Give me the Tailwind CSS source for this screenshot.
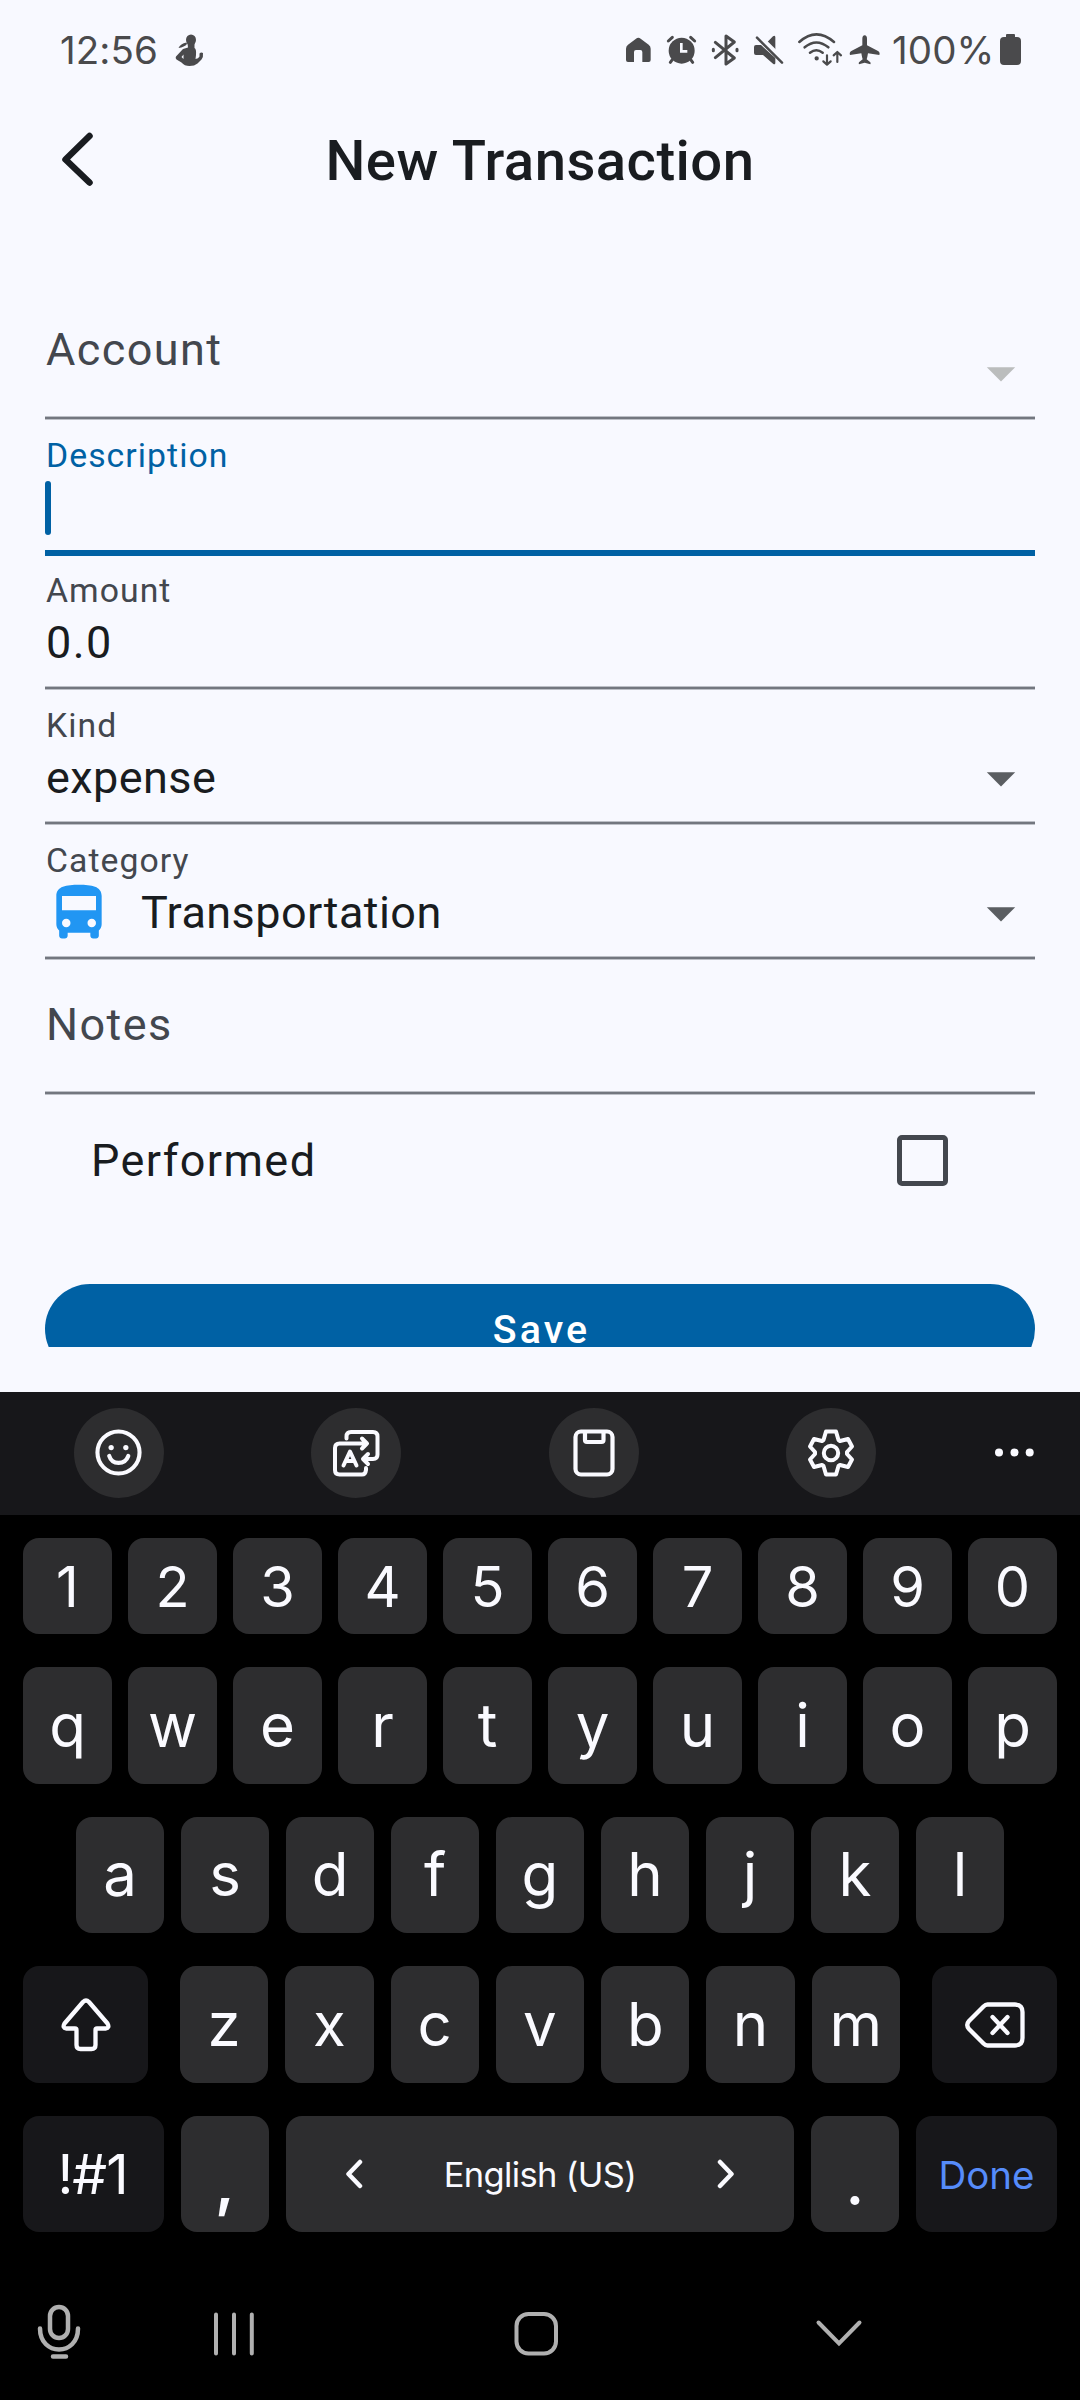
<!DOCTYPE html>
<html lang="en">
<head>
<meta charset="utf-8">
<title>New Transaction</title>
<script src="https://cdn.jsdelivr.net/npm/@tailwindcss/browser@4"></script>
</head>
<body class="w-[1080px] h-[2400px] overflow-hidden bg-[#f8f9ff] flex flex-col font-['Roboto',sans-serif] text-[#191c20]">

<!-- Status bar -->
<header class="h-[100px] shrink-0 flex items-start pt-[32px] pl-[60px] text-[#4a4a4c] font-['Inter',sans-serif] text-[38.500px] leading-[36px]">
  <span class="w-[111px] tracking-[0.1px] whitespace-nowrap">12:56</span>
  <svg class="ml-[4px] w-[30px] h-[36px]" viewBox="175 32 30 36" fill="#4a4a4c"><ellipse cx="191" cy="40" rx="5" ry="5.5"/><path d="M187.500 43h7v5q2 1 1.500 7l-.5 4q3-.500 4-2.500l0-3q1.500-1.500 3.500-.5.500 4-1.500 6.500l-4 4q-3 2.500-8 2.500t-8-3.500l-5-3q-1.500-1.500-.5-3l7-7.500 5-1.500z"/><path d="M178.500 48q2-4.500 8-5.500l.5 1.500q-2.500 3-8.500 4z"/><path d="M183.500 54.500v4.500l-2-2z" fill="#f8f9ff"/></svg>
  <div class="flex ml-[419px]">
    <svg class="w-[40px] h-[36px]" viewBox="72 96 120 108" fill="#4a4a4c"><path d="M78 146Q78 138 84 134L108 116Q115 111 122 116L146 134Q152 138 152 146V180Q152 186 146 186H127V156Q127 150 121 150H108Q102 150 102 156V186H84Q78 186 78 180Z"/></svg>
    <svg class="w-[45px] h-[36px]" viewBox="192 96 135 108"><g stroke="#4a4a4c" fill="none" stroke-linecap="round"><path stroke-width="9" d="M205 123L217 112M284 123L272 112"/><path stroke-width="9" d="M217 179L211 187M272 179L278 187"/></g><circle cx="245" cy="152" r="39" fill="#4a4a4c"/><path d="M244 129V154H262" fill="none" stroke="#f8f9ff" stroke-width="8"/></svg>
    <svg class="w-[41px] h-[36px]" viewBox="327 96 123 108" fill="none" stroke="#4a4a4c" stroke-width="9" stroke-linecap="round" stroke-linejoin="round"><path d="M346 127L403 174L378 192V108L403 126L346 173"/><path d="M340 148V152M411 148V152" stroke-width="9"/></svg>
    <svg class="w-[45px] h-[36px]" viewBox="450 96 135 108" fill="#4a4a4c"><path d="M500 128L519 109Q526 104 526 112V152ZM468 135H483L526 174V188Q526 196 519 191L489 165H468Q462 165 462 159V141Q462 135 468 135Z"/><path d="M478 105L554 180" stroke="#f8f9ff" stroke-width="8"/><path d="M471 113L546 188" stroke="#4a4a4c" stroke-width="7.500" stroke-linecap="round"/></svg>
    <svg class="w-[51px] h-[36px]" viewBox="585 96 153 108" fill="none" stroke="#4a4a4c" stroke-width="7.500" stroke-linecap="round" stroke-linejoin="round"><path d="M598 126Q649 80 702 126M614 142Q649 113 685 142M630 158Q649 143 668 158"/><circle cx="650" cy="175" r="3.500" fill="#4a4a4c" stroke-width="6"/><path d="M681 166V193M670 184L681 194L692 184M712 186V157M701 166L712 156L723 166" stroke-width="6.500"/></svg>
    <svg class="w-[38px] h-[36px]" viewBox="738 96 114 108" fill="#4a4a4c"><path d="M794 106Q801 107 801 116V136L834 153Q841 157 838 165L804 160Q802 172 800 178L811 187Q813 190 811 193L794 188L777 193Q775 190 777 187L788 178Q786 172 784 160L750 165Q747 157 754 153L787 136V116Q787 107 794 106Z"/></svg>
  </div>
  <span class="ml-[8px] w-[106px] tracking-[0.1px] whitespace-nowrap">100%</span>
  <svg class="w-[26px] h-[36px]" viewBox="998 32 26 36" fill="#4a4a4c"><path d="M1006 37v-2q0-1 1-1h7q1 0 1 1v2h2q4 0 4 4v20q0 4-4 4h-13q-4 0-4-4v-20q0-4 4-4z"/></svg>
</header>

<!-- App bar -->
<div class="h-[120px] shrink-0 flex items-center relative">
  <svg class="ml-[54px] w-[48px] h-[60px]" viewBox="55 130 48 60" fill="none" stroke="#191c20" stroke-width="6.500" stroke-linecap="round" stroke-linejoin="round"><path d="M90.500 136L66.500 159.500L90.500 182.500"/></svg>
  <h1 class="absolute inset-x-0 top-[31px] text-center text-[56.25px] leading-[60px] font-medium tracking-[0.45px]">New Transaction</h1>
</div>

<!-- Form -->
<main class="h-[1127px] shrink-0 pt-[65px] px-[45px] overflow-hidden text-[45px] leading-[56px] tracking-[1.4px]">
  <div class="h-[135px] flex flex-col">
    <div class="flex-1 flex justify-between pt-[37px]"><span class="pl-px text-[#43474e]">Account</span>
      <svg class="w-[68px] h-[68px] mt-[17px]" viewBox="0 0 24 24" fill="#bbbdbd"><path d="M7 10l5 5 5-5z"/></svg></div>
    <div class="h-[4px] bg-[#73777f] border-y border-[#bdc0c7]"></div>
  </div>
  <div class="h-[136px] flex flex-col text-[#0061a4]">
    <div class="flex-1 pt-[16px]"><div class="pl-px text-[33.75px] leading-[40px] tracking-[1.050px]">Description</div>
      <div class="mt-[5px] w-[5.600px] h-[54px] rounded-full bg-[#0061a4]"></div></div>
    <div class="h-[6px] bg-[#0061a4]"></div>
  </div>
  <div class="h-[134px] flex flex-col">
    <div class="flex-1 pt-[15px] pl-px"><div class="text-[33.75px] leading-[40px] tracking-[1.050px] text-[#43474e]">Amount</div><div class="mt-[4px]">0.0</div></div>
    <div class="h-[4px] bg-[#73777f] border-y border-[#bdc0c7]"></div>
  </div>
  <div class="h-[135px] flex flex-col">
    <div class="flex-1 pt-[16px] flex justify-between"><div class="pl-px"><div class="text-[33.75px] leading-[40px] tracking-[1.050px] text-[#43474e]">Kind</div><div class="mt-[4px] tracking-[0.42px]">expense</div></div>
      <svg class="w-[68px] h-[68px] mt-[38px]" viewBox="0 0 24 24" fill="#5b5e62"><path d="M7 10l5 5 5-5z"/></svg></div>
    <div class="h-[4px] bg-[#73777f] border-y border-[#bdc0c7]"></div>
  </div>
  <div class="h-[135px] flex flex-col">
    <div class="flex-1 pt-[16px] flex justify-between"><div><div class="pl-px text-[33.75px] leading-[40px] tracking-[1.050px] text-[#43474e]">Category</div>
      <div class="mt-[4px] flex"><svg class="w-[68px] h-[68px] -mt-[6px] mr-[28px]" viewBox="0 0 24 24" fill="#2196f3"><path d="M4 16c0 .88.39 1.670 1 2.220V20c0 .55.45 1 1 1h1c.55 0 1-.45 1-1v-1h8v1c0 .55.45 1 1 1h1c.55 0 1-.45 1-1v-1.780c.61-.55 1-1.340 1-2.220V6c0-3.500-3.580-4-8-4s-8 .5-8 4v10zm3.500 1c-.83 0-1.500-.67-1.500-1.500S6.670 14 7.500 14s1.500.67 1.500 1.500S8.330 17 7.500 17zm9 0c-.83 0-1.500-.67-1.500-1.500s.67-1.500 1.500-1.500 1.500.67 1.500 1.500-.67 1.500-1.500 1.500zm1.500-6H6V6h12v5z"/></svg><span class="tracking-[0.42px]">Transportation</span></div></div>
      <svg class="w-[68px] h-[68px] mt-[38px]" viewBox="0 0 24 24" fill="#5b5e62"><path d="M7 10l5 5 5-5z"/></svg></div>
    <div class="h-[4px] bg-[#73777f] border-y border-[#bdc0c7]"></div>
  </div>
  <div class="h-[135px] flex flex-col">
    <div class="flex-1 pt-[37px] pl-px text-[#43474e]">Notes</div>
    <div class="h-[4px] bg-[#73777f] border-y border-[#bdc0c7]"></div>
  </div>
  <div class="h-[131px] flex items-center justify-between pl-[46px] pr-[87px]">
    <span>Performed</span>
    <span class="w-[51px] h-[51px] rounded-[5px] border-[5.600px] border-[#43474e]"></span>
  </div>
  <button class="mt-[58px] w-full h-[90px] rounded-full bg-[#0061a4] text-white text-[39.375px] leading-[91px] font-medium tracking-[3.100px] pl-[3px] block">Save</button>
</main>
<div class="h-[45px] shrink-0"></div>

<!-- Keyboard -->
<section class="flex-1 bg-black text-[#fafaff] font-['Inter',sans-serif]">
  <div class="h-[123px] bg-[#17171a] flex items-start pt-[16px] pl-[74px]">
    <div class="size-[90px] rounded-full bg-[#2d2d2f] mr-[147px] flex items-center justify-center">
      <svg class="w-[47px] h-[47px] mr-px mb-px" viewBox="0 0 48 48" fill="none" stroke="#fafaff" stroke-width="4.200" stroke-linecap="round"><circle cx="24" cy="24" r="21.500"/><path d="M14.500 27.500c3 9.500 16 9.500 19.500 0"/><circle cx="16.500" cy="19" r="2.700" fill="#fafaff" stroke="none"/><circle cx="31.500" cy="19" r="2.700" fill="#fafaff" stroke="none"/></svg>
    </div>
    <div class="size-[90px] rounded-full bg-[#2d2d2f] mr-[148px] flex items-center justify-center">
      <svg class="w-[48px] h-[48px] mr-px mb-px" viewBox="0 0 48 48" fill="none" stroke="#fafaff" stroke-width="4" stroke-linecap="round" stroke-linejoin="round"><path d="M14.500 9.500V7.500q0-4.500 4.500-4.500h22q4.500 0 4.500 4.500v18q0 4.500-4.500 4.500h-9M36 25l-5 5 5 5"/><path d="M35 14.500H7.500q-4.500 0-4.500 4.500v22q0 4.500 4.500 4.500h22.500q3.500 0 4-4.500v-2M30 9.500l5 5-5 5"/><path d="M11.500 36.500l6.500-14 6.500 14M14 32h8"/></svg>
    </div>
    <div class="size-[90px] rounded-full bg-[#2d2d2f] mr-[147px] flex items-center justify-center">
      <svg class="w-[48px] h-[48px] mr-px mb-px" viewBox="0 0 48 48" fill="none" stroke="#fafaff" stroke-width="4.200"><rect x="5.500" y="2.500" width="37" height="43" rx="5.500"/><path d="M15 3v8q0 2 2 2h14.500q2 0 2-2V3"/></svg>
    </div>
    <div class="size-[90px] rounded-full bg-[#2d2d2f] mr-[117px] flex items-center justify-center">
      <svg class="w-[48px] h-[48px] mr-px mb-px" viewBox="0 0 48 48" fill="none" stroke="#fafaff" stroke-width="4" stroke-linejoin="round"><circle cx="24" cy="24" r="7.200"/><path d="M19 2.500h10l2.500 8.500 1.500 1 8-2 4 7.500-5 5.500v2l5 5.500-4 7.500-8-2-1.500 1-2.500 8.500h-10l-2.500-8.500-1.500-1-8 2-4-7.500 5-5.500v-2l-5-5.500 4-7.500 8 2 1.500-1z"/></svg>
    </div>
    <svg class="w-[42px] h-[90px]" viewBox="0 0 42 90" fill="#fafaff"><circle cx="6" cy="44.500" r="4"/><circle cx="21.500" cy="44.500" r="4"/><circle cx="36.700" cy="44.500" r="4"/></svg>
  </div>

  <div class="pt-[23px] px-[23px] flex flex-col">
    <div class="flex gap-[16px] h-[96px] mb-[33px] text-[56px] leading-[98px] text-center [&>*]:flex-1 [&>*]:rounded-[16px] [&>*]:bg-[#2d2d2f]">
      <div>1</div><div>2</div><div>3</div><div>4</div><div>5</div><div>6</div><div>7</div><div>8</div><div>9</div><div>0</div>
    </div>
    <div class="flex gap-[16px] h-[117px] mb-[33px] text-[60px] leading-[116px] text-center [&>*]:flex-1 [&>*]:rounded-[16px] [&>*]:bg-[#2d2d2f]">
      <div>q</div><div>w</div><div>e</div><div>r</div><div>t</div><div>y</div><div>u</div><div>i</div><div>o</div><div>p</div>
    </div>
    <div class="flex gap-[17px] h-[116px] mb-[33px] px-[53px] text-[60px] leading-[115px] text-center [&>*]:flex-1 [&>*]:rounded-[16px] [&>*]:bg-[#2d2d2f]">
      <div>a</div><div>s</div><div>d</div><div>f</div><div>g</div><div>h</div><div>j</div><div>k</div><div>l</div>
    </div>
    <div class="flex h-[117px] mb-[33px] text-[60px] leading-[116px] text-center">
      <div class="w-[125px] rounded-[16px] bg-[#17171a] flex items-center justify-center">
        <svg class="w-[54px] h-[54px]" viewBox="0 0 54 54" fill="none" stroke="#fafaff" stroke-width="4.300" stroke-linejoin="round"><path d="M24 4Q27 1 30 4L48.500 25.500Q51 30 46.500 30.500H38Q36.500 30.500 36.500 32V47Q36.500 51 32.500 51H21.500Q17.500 51 17.500 47V32Q17.500 30.500 16 30.500H7.500Q3 30 5.500 25.500Z"/></svg>
      </div>
      <div class="flex-1 flex gap-[17px] px-[32px] [&>*]:flex-1 [&>*]:rounded-[16px] [&>*]:bg-[#2d2d2f]">
        <div>z</div><div>x</div><div>c</div><div>v</div><div>b</div><div>n</div><div>m</div>
      </div>
      <div class="w-[125px] rounded-[16px] bg-[#17171a] flex items-center justify-center">
        <svg class="w-[60px] h-[46px]" viewBox="0 0 60 46" fill="none" stroke="#fafaff" stroke-width="4.300" stroke-linecap="round" stroke-linejoin="round"><path d="M22.500 2.500H50Q57.500 2.500 57.500 10V36Q57.500 43.500 50 43.500H22.500Q20.500 43.500 18.500 41.500L4 27Q.5 23 4 19L18.500 4.500Q20.500 2.500 22.500 2.500Z"/><path d="M27.500 15L42.500 31M42.500 15L27.500 31"/></svg>
      </div>
    </div>
    <div class="flex gap-[17px] h-[116px] text-center">
      <div class="w-[141px] rounded-[16px] bg-[#17171a] text-[55px] leading-[117px] tracking-[-1px] pr-[2px]">!#1</div>
      <div class="w-[88px] rounded-[16px] bg-[#2d2d2f] text-[62px] leading-[133px] font-semibold">,</div>
      <div class="w-[508px] rounded-[16px] bg-[#2d2d2f] flex items-center justify-between px-[59px] text-[34.500px]">
        <svg class="w-[18px] h-[30px]" viewBox="0 0 18 30" fill="none" stroke="#fafaff" stroke-width="4.500" stroke-linecap="round" stroke-linejoin="round"><path d="M15 3L3.500 15L15 27"/></svg>
        <span class="tracking-[-0.65px] pt-[2px]">English (US)</span>
        <svg class="w-[18px] h-[30px]" viewBox="0 0 18 30" fill="none" stroke="#fafaff" stroke-width="4.500" stroke-linecap="round" stroke-linejoin="round"><path d="M3 3L14.500 15L3 27"/></svg>
      </div>
      <div class="w-[88px] rounded-[16px] bg-[#2d2d2f] text-[62px] leading-[133px] font-medium">.</div>
      <div class="w-[141px] rounded-[16px] bg-[#17171a] text-[#568cfa] text-[38.500px] leading-[118px]">Done</div>
    </div>
  </div>

  <!-- Navigation bar -->
  <nav class="h-[168px] pt-[66px] pl-[32px] flex items-start">
    <svg class="w-[54px] h-[70px]" viewBox="32 2298 54 70" fill="none" stroke="#b0b0b0" stroke-width="4.500" stroke-linecap="round"><rect x="50" y="2307" width="18" height="31" rx="9"/><path d="M40 2328.500c0 28 38 28 38 0M53 2356.500h13"/></svg>
    <svg class="ml-[122px] w-[54px] h-[70px]" viewBox="208 2298 54 70" stroke="#b0b0b0" stroke-width="4" stroke-linecap="round"><path d="M216 2314.500V2353.500M234 2314.500V2353.500M251.800 2314.500V2353.500"/></svg>
    <svg class="ml-[246px] w-[56px] h-[70px]" viewBox="508 2298 56 70" fill="none" stroke="#b0b0b0" stroke-width="4"><rect x="516.500" y="2314" width="39.500" height="39.500" rx="12"/></svg>
    <svg class="ml-[248px] w-[56px] h-[70px]" viewBox="812 2298 56 70" fill="none" stroke="#b0b0b0" stroke-width="4" stroke-linecap="round"><path d="M818.500 2322.500L839 2343.500L859.500 2322.500"/></svg>
  </nav>
</section>
</body>
</html>
